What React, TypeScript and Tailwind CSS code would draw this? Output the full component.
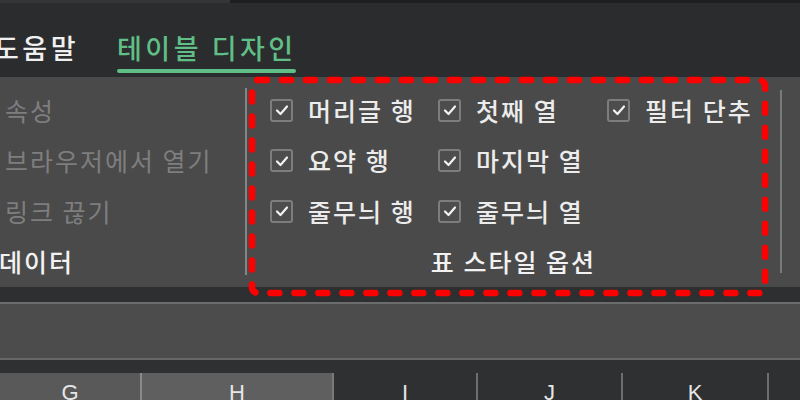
import React from "react";

const leftItems = ["속성", "브라우저에서 열기", "링크 끊기"];

const options: [string, string, string | null][] = [
  ["머리글 행", "첫째 열", "필터 단추"],
  ["요약 행", "마지막 열", null],
  ["줄무늬 행", "줄무늬 열", null],
];

const columns = [
  { label: "G", w: "w-[142px]", cls: "bg-[#595959] border-r-2 border-[#8a8a8a]" },
  { label: "H", w: "w-[192px]", cls: "bg-[#5f5f5f] border-r-2 border-[#7a7a7a]" },
  { label: "I", w: "w-[144px]", cls: "border-r-2 border-[#6e6e6e]" },
  { label: "J", w: "w-[145px]", cls: "border-r-2 border-[#6e6e6e]" },
  { label: "K", w: "w-[146px]", cls: "border-r-2 border-[#6e6e6e]" },
];

function Check({ label }: { label: string }) {
  return (
    <div className="flex items-center gap-[15px]">
      <span className="grid size-[23px] place-items-center rounded-[3px] border-2 border-[#7d7d7d] bg-[#4d4d4d]">
        <svg viewBox="0 0 18 18" className="size-[18px]">
          <polyline
            points="4,9.5 7.5,13 14,5.5"
            fill="none"
            stroke="#f2f2f2"
            strokeWidth="2.2"
            strokeLinecap="round"
            strokeLinejoin="round"
          />
        </svg>
      </span>
      <span className="text-[25px] font-medium leading-none tracking-[2px] text-[#ececec] whitespace-nowrap">
        {label}
      </span>
    </div>
  );
}

export default function App() {
  return (
    <div className="relative flex h-[400px] w-[800px] flex-col overflow-hidden bg-[#2b2c2e] font-['Noto_Sans_CJK_KR','Noto_Sans',sans-serif]">
      {/* top edge */}
      <div className="flex h-[3px]">
        <div className="w-[230px] bg-[#343537]" />
        <div className="flex-1 bg-[#1e1f21]" />
      </div>

      {/* tabs */}
      <div className="flex h-[74px] items-start">
        <div className="ml-[-6px] mt-[31px] text-[27px] font-medium leading-none tracking-[3.5px] text-[#f0f0f0]">
          도움말
        </div>
        <div className="ml-[38px] mt-[31px] flex flex-col">
          <span className="text-[27px] font-medium leading-none tracking-[3.5px] text-[#5fbf86]">테이블 디자인</span>
          <span className="mt-[8px] h-[4px] w-[179px] rounded-full bg-[#5fbf86]" />
        </div>
      </div>

      {/* ribbon */}
      <div className="flex h-[210px] bg-[#4a4a4a] pt-[8px]">
        <div className="flex w-[245px] flex-col pl-[5px]">
          {leftItems.map((t) => (
            <div key={t} className="flex h-[51px] items-center text-[25px] leading-none tracking-[2px] text-[#7e7e7e]">
              {t}
            </div>
          ))}
          <div className="ml-[-6px] flex h-[51px] items-center text-[25px] font-medium leading-none tracking-[2px] text-[#f2f2f2]">
            데이터
          </div>
        </div>
        <div className="mt-[3px] h-[187px] w-[2px] bg-[#858585]" />
        <div className="flex w-[533px] flex-col pl-[23px]">
          {options.map((row, i) => (
            <div key={i} className="grid h-[51px] grid-cols-[168px_169px_1fr] items-center">
              {row.map((c, j) => (c ? <Check key={j} label={c} /> : <span key={j} />))}
            </div>
          ))}
          <div className="flex h-[51px] items-center justify-center pr-[23px] text-[25px] font-medium leading-none tracking-[2px] text-[#f2f2f2]">
            표 스타일 옵션
          </div>
        </div>
        <div className="mt-[5px] h-[183px] w-[2px] bg-[#7a7a7a]" />
        <div className="flex-1" />
      </div>

      <div className="h-[15px] bg-[#2e2f31]" />
      <div className="h-[2px] bg-[#6c6c6c]" />
      {/* formula bar */}
      <div className="h-[54px] bg-[#4c4c4c]" />
      <div className="h-[2px] bg-[#676767]" />
      <div className="h-[13px] bg-[#2f3032]" />

      {/* column headers */}
      <div className="flex h-[27px] bg-[#2f3032]">
        {columns.map((c) => (
          <div
            key={c.label}
            className={`${c.w} ${c.cls} flex justify-center pt-[9px] font-['Liberation_Sans',sans-serif] text-[22px] leading-none text-[#e6e6e6]`}
          >
            {c.label}
          </div>
        ))}
      </div>

      {/* red dashed highlight */}
      <svg className="pointer-events-none absolute left-0 top-0" width="800" height="400">
        <rect
          x="252"
          y="80"
          width="513"
          height="213"
          rx="6"
          fill="none"
          stroke="#ff0000"
          strokeWidth="6.5"
          strokeDasharray="9 15"
          strokeLinecap="round"
        />
      </svg>
    </div>
  );
}
